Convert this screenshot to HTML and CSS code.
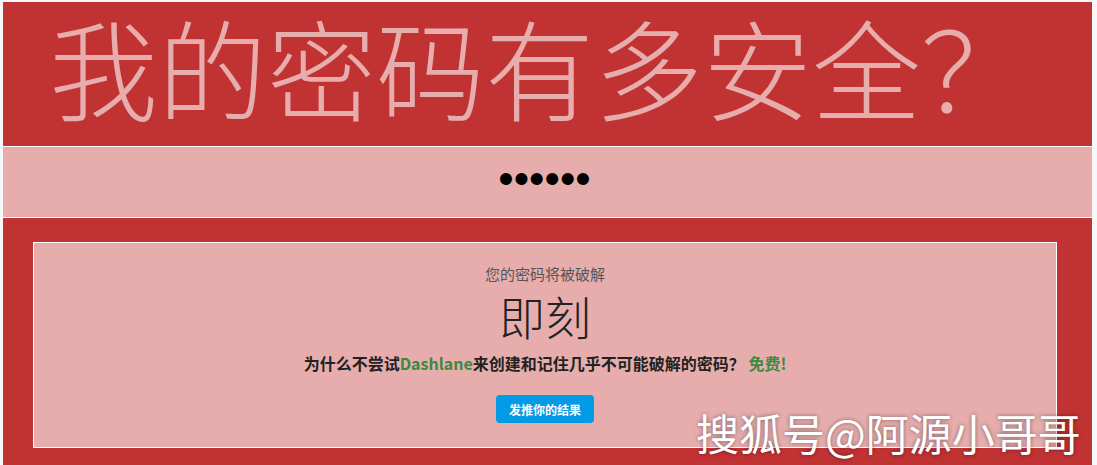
FILE: index.html
```html
<!DOCTYPE html>
<html lang="zh-CN">
<head>
    <meta charset="UTF-8">
    <meta name="viewport" content="width=device-width, initial-scale=1.0">
    <title>我的密码有多安全？</title>
    <link rel="stylesheet" href="styles.css">
</head>
<body>
    <div class="page">
        <!-- 标题 -->
        <h1 class="title">我的密码有多安全？</h1>

        <!-- 密码输入 -->
        <div class="pwd-band">
            <span class="pwd">••••••</span>
        </div>

        <!-- 结果 -->
        <div class="result-wrap">
            <div class="result">
                <p class="result-label">您的密码将被破解</p>
                <p class="result-time">即刻</p>
                <p class="promo">为什么不尝试<a href="#" class="green">Dashlane</a>来创建和记住几乎不可能破解的密码？ <span class="green">免费!</span></p>
                <button class="share">发推你的结果</button>
            </div>
        </div>
    </div>

    <div class="watermark">搜狐号@阿源小哥哥</div>
</body>
</html>
```

FILE: styles.css
```css
body {
    font-family: "Noto Sans CJK SC", "Open Sans", sans-serif;
    margin: 0;
    padding: 0;
    background-color: #f7f7f7;
}

.page {
    margin: 2px 5px 0 3px;
    background-color: #c13233;
    height: 463px;
    overflow: hidden;
}

.title {
    margin: 0;
    height: 144px;
    padding-left: 46px;
    font-size: 109px;
    font-weight: 300;
    line-height: 128px;
    color: #e7adad;
    white-space: nowrap;
}

.pwd-band {
    height: 64px;
    padding-bottom: 6px;
    background-color: #e7adad;
    border-top: 1px solid #fff;
    border-bottom: 1px solid #fff;
    display: flex;
    justify-content: center;
    align-items: center;
}
.pwd {
    font-family: "Liberation Sans", sans-serif;
    font-size: 44px;
    line-height: 1;
    color: #000;
    margin-right: 6px;
}

.result-wrap {
    padding: 24px 35px 0 30px;
}
.result {
    height: 204px;
    background-color: #e7adad;
    border: 1px solid #fff;
    text-align: center;
}
.result-label {
    margin: 0;
    padding-top: 21px;
    font-size: 15px;
    line-height: 20px;
    color: #555;
}
.result-time {
    margin: 0;
    font-size: 46px;
    font-weight: 300;
    line-height: 62px;
    color: #222;
}
.promo {
    margin: 5px 0 0;
    font-size: 16px;
    font-weight: bold;
    line-height: 24px;
    color: #222;
}
.green {
    color: #3a8a3f;
    text-decoration: none;
}
.share {
    margin-top: 20px;
    padding: 0 13px;
    height: 28px;
    background-color: #039be5;
    color: #fff;
    font-family: "Noto Sans CJK SC", sans-serif;
    font-size: 12px;
    font-weight: bold;
    border: none;
    border-radius: 4px;
    cursor: pointer;
}

.watermark {
    position: absolute;
    left: 696px;
    top: 405px;
    font-size: 43px;
    line-height: 54px;
    color: #fff;
    text-shadow: 0 0 4px rgba(0, 0, 0, 0.45);
    white-space: nowrap;
}
```
